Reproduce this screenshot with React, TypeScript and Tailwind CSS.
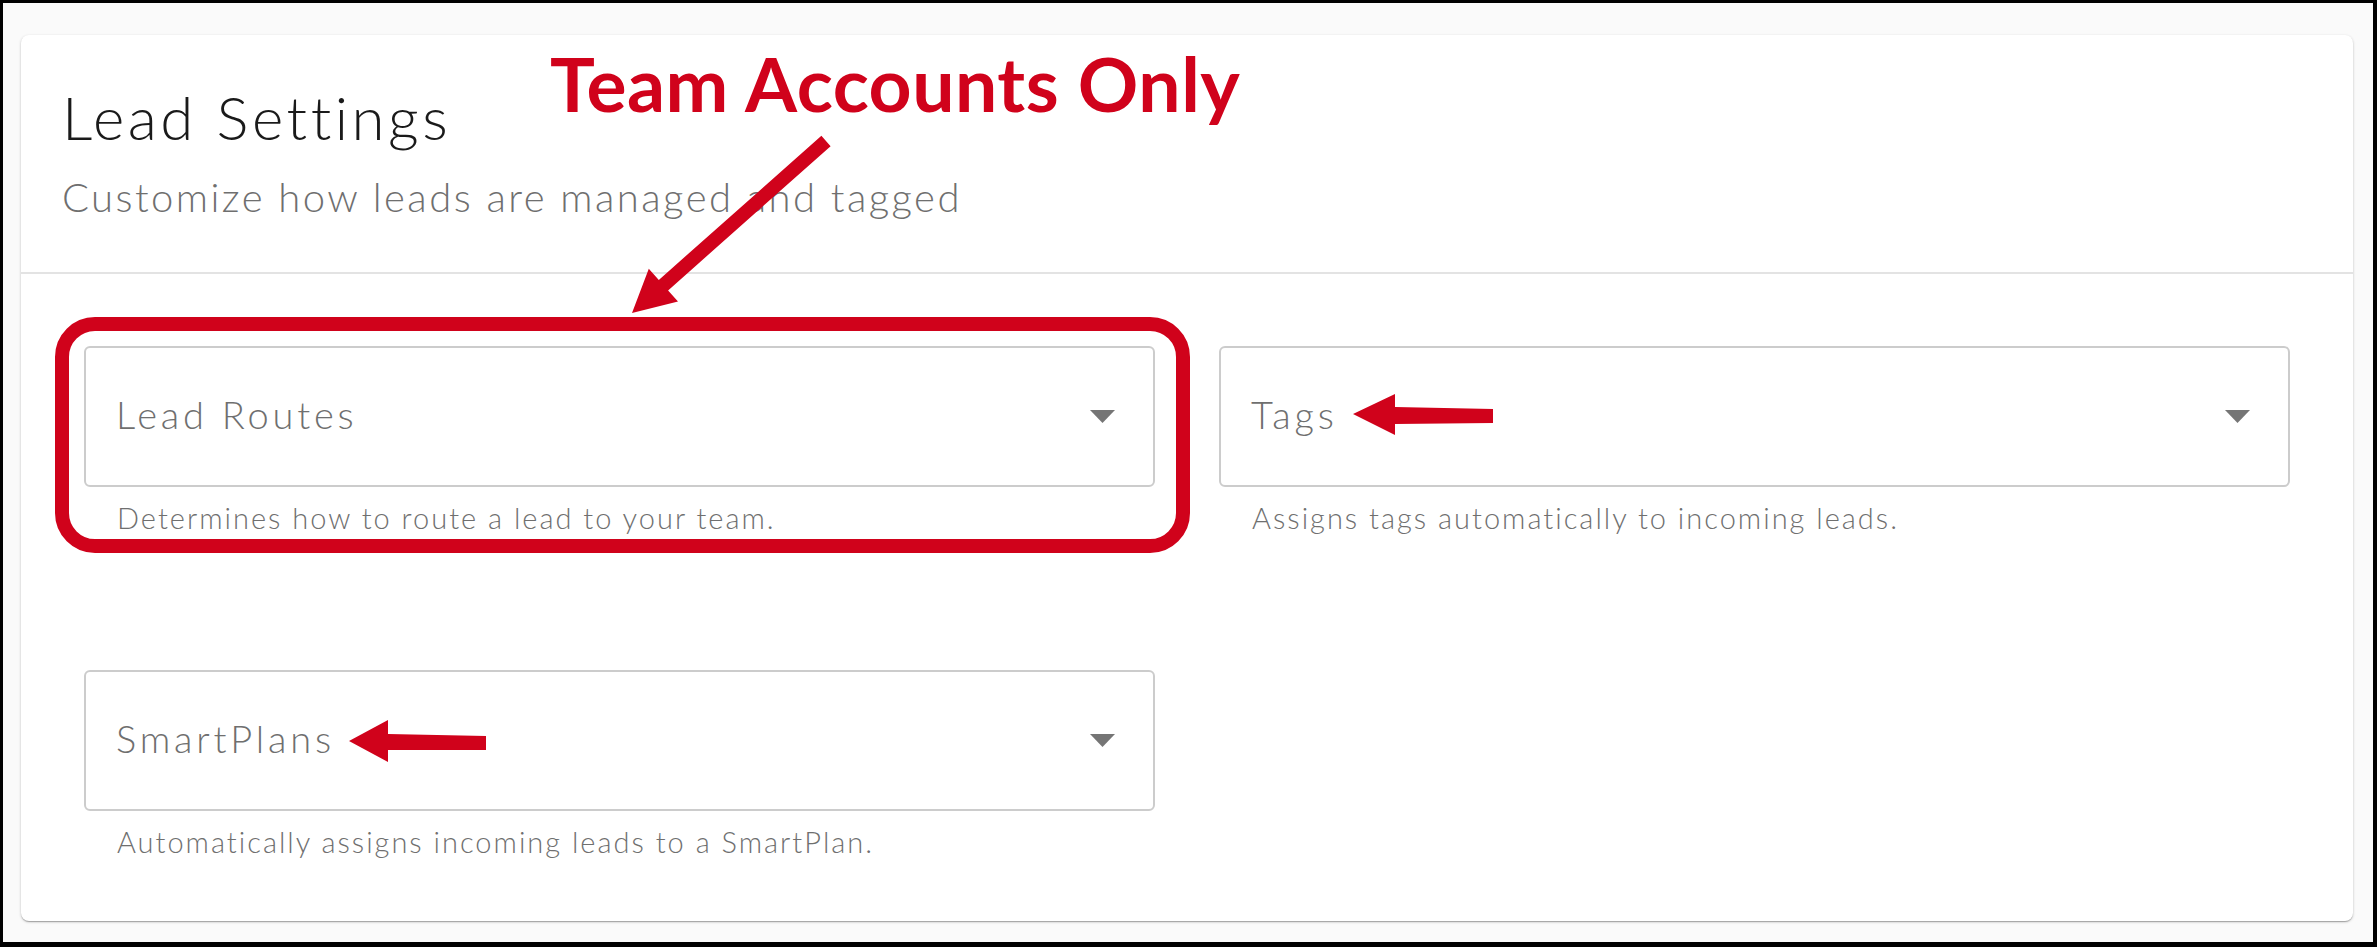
import React from 'react'

const FIELDS = [
  { label: 'Lead Routes', help: 'Determines how to route a lead to your team.' },
  { label: 'Tags', help: 'Assigns tags automatically to incoming leads.' },
  { label: 'SmartPlans', help: 'Automatically assigns incoming leads to a SmartPlan.' },
]

// straight arrow with a triangular head, from tail to tip
function arrowPoints(tx: number, ty: number, px: number, py: number, shaft: number, headLen: number, headW: number) {
  const dx = px - tx
  const dy = py - ty
  const len = Math.hypot(dx, dy)
  const ux = dx / len
  const uy = dy / len
  const nx = uy
  const ny = -ux
  const bx = px - ux * headLen
  const by = py - uy * headLen
  const s = shaft / 2
  const h = headW / 2
  const pts = [
    [tx + nx * s, ty + ny * s],
    [bx + nx * s, by + ny * s],
    [bx + nx * h, by + ny * h],
    [px, py],
    [bx - nx * h, by - ny * h],
    [bx - nx * s, by - ny * s],
    [tx - nx * s, ty - ny * s],
  ]
  return pts.map(p => p[0].toFixed(1) + ',' + p[1].toFixed(1)).join(' ')
}

function SelectField({ label, help }: { label: string; help: string }) {
  return (
    <div>
      <div className="h-[141px] border-2 border-[#cccccc] rounded-md flex items-center justify-between pl-[30px] pr-[38px] pb-[6px]">
        <span className="text-[38px] leading-none font-light text-[#6f6f6f] tracking-[3.8px]">{label}</span>
        <svg width="25" height="13" viewBox="0 0 25 13" className="mt-[6px]">
          <path d="M0 0h25L12.5 13z" fill="#757575" />
        </svg>
      </div>
      <p className="mt-[16px] pl-[33px] text-[29px] leading-none font-light text-[#6f6f6f] tracking-[2px]">{help}</p>
    </div>
  )
}

export default function App() {
  return (
    <div className="relative w-[2377px] h-[947px] font-['Lato','Noto_Sans',sans-serif]">
      <div className="h-full bg-[#fafafa] border-[3px] border-r-4 border-b-[5px] border-black pl-[18px] pr-[20px] pt-[32px]">
        <div className="bg-white rounded-lg shadow-[0_1px_3px_rgba(0,0,0,0.2),0_1px_1px_rgba(0,0,0,0.14),0_2px_1px_-1px_rgba(0,0,0,0.12)]">
          <div className="pl-[41px] pt-[52px] pb-[55px] border-b-2 border-[#e3e3e3]">
            <h1 className="text-[60px] leading-none font-light text-[#1a1a1a] tracking-[3.5px]">Lead Settings</h1>
            <p className="mt-[30px] text-[40px] leading-none font-light text-[#6f6f6f] tracking-[2.45px]">Customize how leads are managed and tagged</p>
          </div>
          <div className="grid grid-cols-2 gap-x-[64px] gap-y-[138px] px-[63px] pt-[72px] pb-[65px]">
            {FIELDS.map(f => (
              <SelectField key={f.label} label={f.label} help={f.help} />
            ))}
          </div>
        </div>
      </div>

      {/* annotations */}
      <div className="absolute left-[550px] top-[46px] text-[75px] leading-none font-bold text-[#d0021b] tracking-[0.5px]">
        Team Accounts Only
      </div>
      <svg className="absolute inset-0 pointer-events-none" width="2377" height="947" viewBox="0 0 2377 947">
        <rect x="62" y="324" width="1121" height="222" rx="33" fill="none" stroke="#d0021b" strokeWidth="14" />
        <polygon points={arrowPoints(826, 141, 632, 313, 14, 42, 44)} fill="#d0021b" />
        <polygon points="1353,414 1395,394 1395,407 1493,409 1493,423 1395,424 1395,435" fill="#d0021b" />
        <polygon points="349,741 388,720 388,734 486,736 486,750 388,750 388,762" fill="#d0021b" />
      </svg>
    </div>
  )
}
